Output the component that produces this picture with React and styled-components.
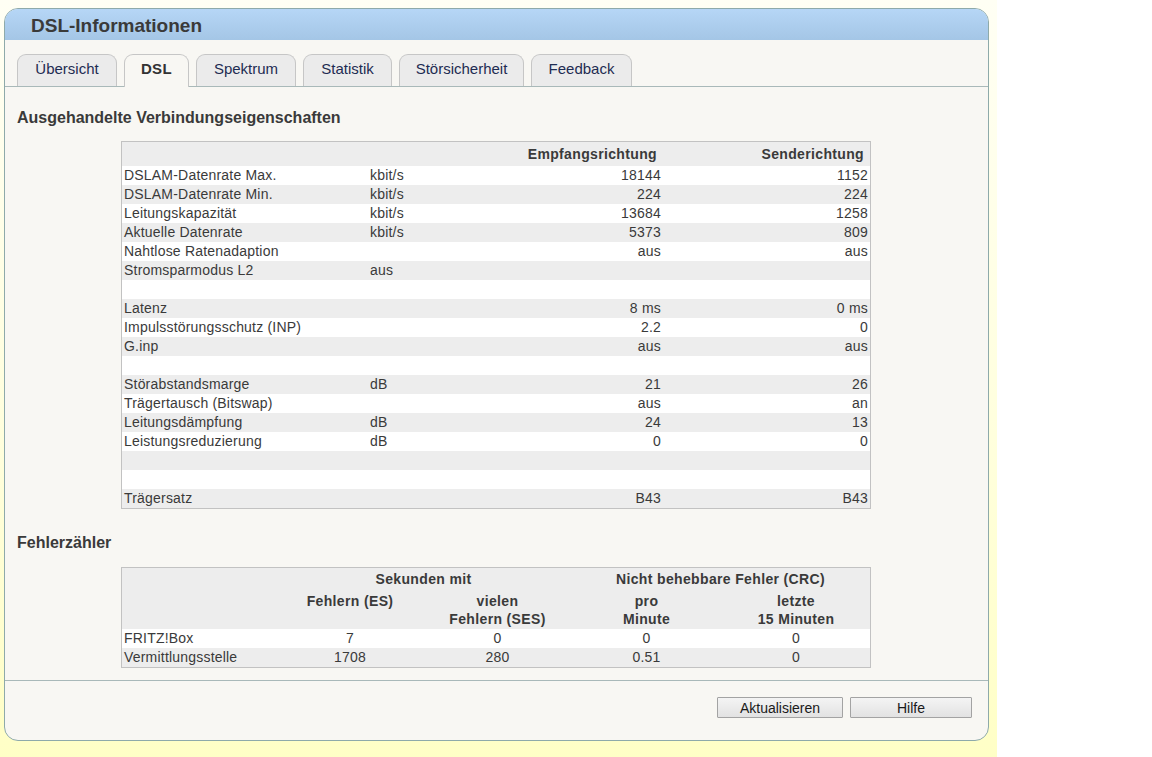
import React from 'react'
import styled, { createGlobalStyle } from 'styled-components'

const GlobalStyle = createGlobalStyle`
  html, body {
    margin: 0;
    padding: 0;
    background: #ffffff;
  }
  body {
    font-family: 'Liberation Sans', Arial, sans-serif;
    font-size: 14px;
    color: #3a3a3a;
  }
`;

const Page = styled.div`
  width: 997px;
  height: 757px;
  box-sizing: border-box;
  padding: 8px 0 0 4px;
  background: linear-gradient(to bottom, #fffff4 0%, #ffffdc 60%, #ffffc6 100%);
`;

const Panel = styled.div`
  width: 985px;
  height: 733px;
  box-sizing: border-box;
  border: 1px solid #8eaaaa;
  border-radius: 14px;
  background: #f8f7f3;
  overflow: hidden;
  display: flex;
  flex-direction: column;
`;

const Header = styled.div`
  height: 31px;
  box-sizing: border-box;
  flex-shrink: 0;
  display: flex;
  align-items: center;
  padding: 3px 0 0 26px;
  background: linear-gradient(to bottom, #b6d6f6, #a4c6e6);

  h1 {
    margin: 0;
    font-size: 19px;
    font-weight: bold;
    color: #3a3a3a;
  }
`;

const TabBar = styled.div`
  margin-top: 14px;
  height: 32px;
  display: flex;
  align-items: flex-end;
  gap: 7px;
  padding-left: 12px;
  border-bottom: 1px solid #a9b9b9;
`;

const Tab = styled.div`
  height: ${p => (p.$active ? '33px' : '32px')};
  margin-bottom: ${p => (p.$active ? '-1px' : '0')};
  box-sizing: border-box;
  width: ${p => p.$w}px;
  display: flex;
  align-items: center;
  justify-content: center;
  padding-bottom: ${p => (p.$active ? '5px' : '4px')};
  border: 1px solid #c6c6c6;
  border-bottom: none;
  border-radius: 9px 9px 0 0;
  background: ${p => (p.$active ? '#f8f7f3' : '#ebebeb')};
  color: ${p => (p.$active ? '#333333' : '#1e2c52')};
  font-weight: ${p => (p.$active ? 'bold' : 'normal')};
  font-size: 15px;
  letter-spacing: ${p => (p.$active ? '0.4px' : '0')};
  cursor: pointer;
`;

const Content = styled.div`
  flex: 1;
  padding: 0 12px;
`;

const SectionTitle = styled.h2`
  margin: ${p => p.$top}px 0 0 0;
  font-size: 16px;
  line-height: 18px;
  font-weight: bold;
  color: #3a3a3a;
`;

const Table = styled.table`
  margin: ${p => p.$top}px 0 0 104px;
  width: 750px;
  border-collapse: separate;
  border-spacing: 0;
  border: 1px solid #c2c2c2;
  table-layout: fixed;
  font-size: 14px;
  color: #3a3a3a;

  td, th {
    padding: 0 2px;
    white-space: nowrap;
    line-height: 19px;
    height: 19px;
  }

  td {
    letter-spacing: 0.2px;
  }

  th {
    font-weight: bold;
    color: #3a3a3a;
    letter-spacing: 0.35px;
  }

  tbody tr:nth-child(odd) {
    background: #ffffff;
  }
  tbody tr:nth-child(even) {
    background: #ededed;
  }
  thead tr {
    background: #ededed;
  }
`;

const InfoHeadRow = styled.tr`
  th {
    height: 23px;
    padding-top: 1px;
    vertical-align: middle;
    text-align: right;
    padding-right: 6px;
  }
`;

const Num = styled.td`
  text-align: right;
`;

const Center = styled.td`
  text-align: center;
`;

const GroupHead = styled.tr`
  th {
    height: 22px;
    text-align: center;
    vertical-align: middle;
  }
`;

const SubHead = styled.tr`
  th {
    height: 39px;
    text-align: center;
    vertical-align: top;
    line-height: 18px;
    padding-top: 2px;
    box-sizing: border-box;
  }
`;

const Footer = styled.div`
  flex-shrink: 0;
  border-top: 1px solid #a9b9b9;
  height: 60px;
  display: flex;
  justify-content: flex-end;
  align-items: flex-start;
  gap: 7px;
  padding: 16px 16px 0 0;
  box-sizing: border-box;
`;

const Button = styled.button`
  width: ${p => p.$w}px;
  height: 21px;
  padding: 0;
  font-family: 'Liberation Sans', Arial, sans-serif;
  font-size: 14px;
  color: #1a1a1a;
  border: 1px solid #a3a3a3;
  border-radius: 1px;
  background: linear-gradient(to bottom, #f4f4f4, #e2e2e2);
  cursor: pointer;
`;

const tabs = [
  { label: 'Übersicht', w: 100 },
  { label: 'DSL', w: 65, active: true },
  { label: 'Spektrum', w: 100 },
  { label: 'Statistik', w: 89 },
  { label: 'Störsicherheit', w: 125 },
  { label: 'Feedback', w: 101 },
];

const infoRows = [
  ['DSLAM-Datenrate Max.', 'kbit/s', '18144', '1152'],
  ['DSLAM-Datenrate Min.', 'kbit/s', '224', '224'],
  ['Leitungskapazität', 'kbit/s', '13684', '1258'],
  ['Aktuelle Datenrate', 'kbit/s', '5373', '809'],
  ['Nahtlose Ratenadaption', '', 'aus', 'aus'],
  ['Stromsparmodus L2', 'aus', '', ''],
  ['', '', '', ''],
  ['Latenz', '', '8 ms', '0 ms'],
  ['Impulsstörungsschutz (INP)', '', '2.2', '0'],
  ['G.inp', '', 'aus', 'aus'],
  ['', '', '', ''],
  ['Störabstandsmarge', 'dB', '21', '26'],
  ['Trägertausch (Bitswap)', '', 'aus', 'an'],
  ['Leitungsdämpfung', 'dB', '24', '13'],
  ['Leistungsreduzierung', 'dB', '0', '0'],
  ['', '', '', ''],
  ['', '', '', ''],
  ['Trägersatz', '', 'B43', 'B43'],
];

const errorRows = [
  ['FRITZ!Box', '7', '0', '0', '0'],
  ['Vermittlungsstelle', '1708', '280', '0.51', '0'],
];

const App = () => {
  return (
    <>
      <GlobalStyle />
      <Page>
        <Panel>
          <Header>
            <h1>DSL-Informationen</h1>
          </Header>
          <TabBar>
            {tabs.map(t => (
              <Tab key={t.label} $w={t.w} $active={t.active}>{t.label}</Tab>
            ))}
          </TabBar>
          <Content>
            <SectionTitle $top={22}>Ausgehandelte Verbindungseigenschaften</SectionTitle>
            <Table $top={14}>
              <colgroup>
                <col style={{ width: 246 }} />
                <col style={{ width: 130 }} />
                <col style={{ width: 165 }} />
                <col style={{ width: 207 }} />
              </colgroup>
              <thead>
                <InfoHeadRow>
                  <th></th>
                  <th></th>
                  <th>Empfangsrichtung</th>
                  <th>Senderichtung</th>
                </InfoHeadRow>
              </thead>
              <tbody>
                {infoRows.map((r, i) => (
                  <tr key={i}>
                    <td>{r[0]}</td>
                    <td>{r[1]}</td>
                    <Num>{r[2]}</Num>
                    <Num>{r[3]}</Num>
                  </tr>
                ))}
              </tbody>
            </Table>

            <SectionTitle $top={25}>Fehlerzähler</SectionTitle>
            <Table $top={15}>
              <colgroup>
                <col style={{ width: 154 }} />
                <col style={{ width: 148 }} />
                <col style={{ width: 147 }} />
                <col style={{ width: 151 }} />
                <col style={{ width: 148 }} />
              </colgroup>
              <thead>
                <GroupHead>
                  <th></th>
                  <th colSpan={2}>Sekunden mit</th>
                  <th colSpan={2}>Nicht behebbare Fehler (CRC)</th>
                </GroupHead>
                <SubHead>
                  <th></th>
                  <th>Fehlern (ES)</th>
                  <th>vielen<br />Fehlern (SES)</th>
                  <th>pro<br />Minute</th>
                  <th>letzte<br />15 Minuten</th>
                </SubHead>
              </thead>
              <tbody>
                {errorRows.map(r => (
                  <tr key={r[0]}>
                    <td>{r[0]}</td>
                    <Center>{r[1]}</Center>
                    <Center>{r[2]}</Center>
                    <Center>{r[3]}</Center>
                    <Center>{r[4]}</Center>
                  </tr>
                ))}
              </tbody>
            </Table>
          </Content>
          <Footer>
            <Button $w={126}>Aktualisieren</Button>
            <Button $w={122}>Hilfe</Button>
          </Footer>
        </Panel>
      </Page>
    </>
  )
}

export default App
